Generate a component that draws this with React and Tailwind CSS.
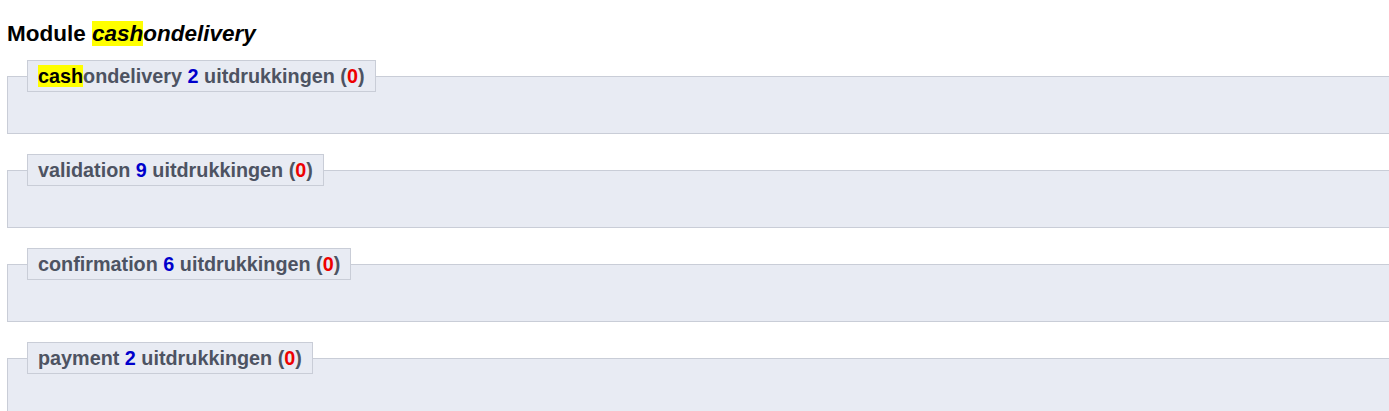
const groups = [
  { name: 'cashondelivery', count: 2, errors: 0, highlight: 'cash' },
  { name: 'validation', count: 9, errors: 0 },
  { name: 'confirmation', count: 6, errors: 0 },
  { name: 'payment', count: 2, errors: 0 },
];

function Name({ name, highlight }) {
  if (!highlight) return <>{name}</>;
  return (
    <>
      <span className="bg-[#ffff00] text-black">{highlight}</span>
      {name.slice(highlight.length)}
    </>
  );
}

export default function App() {
  return (
    <div className="min-h-[411px] bg-white overflow-hidden font-['Liberation_Sans',Arial,sans-serif]">
      <h3 className="pl-[7px] pt-[21px] text-[22.5px] leading-[26px] font-bold text-black">
        Module{' '}
        <em>
          <span className="bg-[#ffff00]">cash</span>ondelivery
        </em>
      </h3>
      <div className="mt-[13px] flex flex-col gap-[20px]">
        {groups.map((g) => (
          <fieldset
            key={g.name}
            className="ml-[7px] w-[1400px] border border-[#c9cdd7] bg-[#e8ebf3] px-0 pt-0 pb-0"
          >
            <legend className="ml-[19px] border border-[#c9cdd7] bg-[#e8ebf3] px-[10px] py-[4px] text-[19.8px] leading-[22px] font-bold text-[#4d5362]">
              <Name name={g.name} highlight={g.highlight} />{' '}
              <span className="text-[#0000cc]">{g.count}</span> uitdrukkingen (
              <span className="text-[#ee0000]">{g.errors}</span>)
            </legend>
            <div className="h-[41px]" />
          </fieldset>
        ))}
      </div>
    </div>
  );
}
